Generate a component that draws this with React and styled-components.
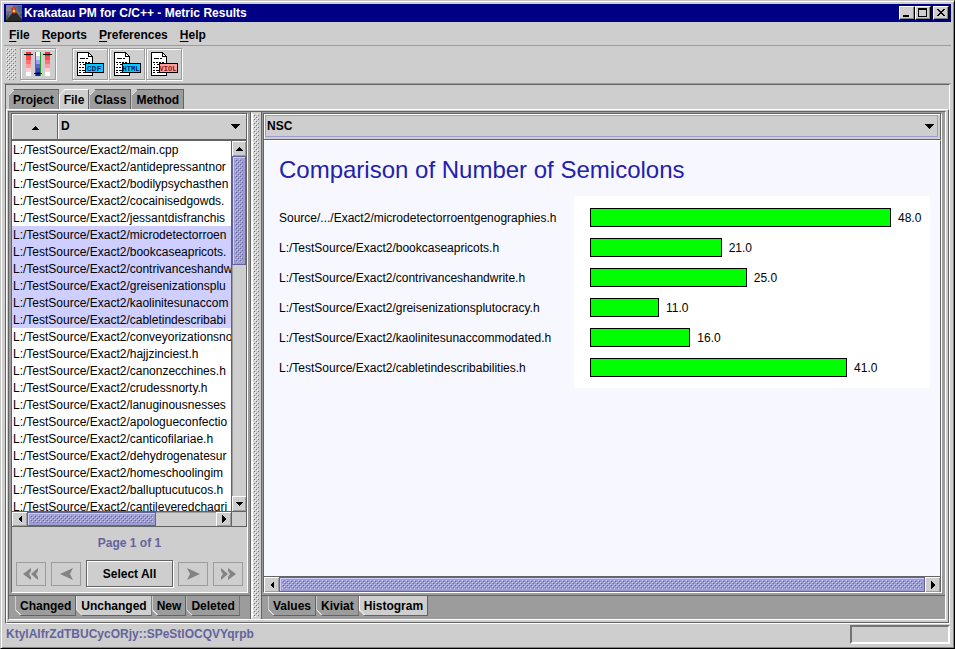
import React, { useState } from 'react';
import styled, { createGlobalStyle, css } from 'styled-components';

const Global = createGlobalStyle`
  *, *::before, *::after { box-sizing: border-box; }
  body {
    margin: 0;
    background: #cecece;
    color: #000;
    font: 12px/16px "Liberation Sans", Arial, sans-serif;
  }
  button, select { margin: 0; font: inherit; color: inherit; border-radius: 0; }
`;

const stipple = (light, dark) => css`
  background-image:
    conic-gradient(at 1px 1px, transparent 75%, ${light} 0),
    conic-gradient(at 1px 1px, transparent 75%, ${light} 0),
    conic-gradient(at 1px 1px, transparent 75%, ${dark} 0),
    conic-gradient(at 1px 1px, transparent 75%, ${dark} 0);
  background-size: 4px 4px;
  background-position: 0 0, 2px 2px, 1px 1px, 3px 3px;
`;

const Window = styled.div`
  display: flex;
  flex-direction: column;
  height: 100vh;
  min-height: 420px;
  padding: 3px;
  border: 1px solid;
  border-color: #c6c6c6 #000 #000 #c6c6c6;
  box-shadow: inset 1px 1px #fff, inset -1px -1px #848484;
  background: #cecece;
`;

const TitleBar = styled.header`
  display: flex;
  align-items: center;
  height: 18px;
  padding: 0 2px;
  background: #000084;
  color: #fff;
`;

const WindowTitle = styled.h1`
  flex: 1;
  margin: 0 0 0 2px;
  font-size: 12px;
  line-height: 18px;
  font-weight: bold;
  white-space: nowrap;
`;

const CaptionButton = styled.button`
  width: 16px;
  height: 14px;
  padding: 0;
  margin-left: ${(p) => (p.$apart ? '2px' : '0')};
  border: 1px solid;
  border-color: #fff #000 #000 #fff;
  box-shadow: inset -1px -1px #848484;
  background: #cecece;
  color: #000;
  svg { display: block; }
`;

const MenuBar = styled.nav`
  display: flex;
  gap: 12px;
  height: 24px;
  padding: 5px 5px 2px;
  border-bottom: 1px solid #9c9c9c;
`;

const MenuButton = styled.button`
  padding: 0;
  border: 0;
  background: none;
  font-weight: bold;
  line-height: 16px;
  &::first-letter { text-decoration: underline; text-underline-offset: 2px; }
`;

const ToolBar = styled.div`
  display: flex;
  height: 38px;
  padding: 2px;
  border-bottom: 1px solid #9c9c9c;
`;

const Grip = styled.div`
  width: 10px;
  height: 32px;
  margin-right: 4px;
  ${stipple('#fff', '#737373')}
`;

const ToolButton = styled.button`
  width: 36px;
  height: 32px;
  padding: 0;
  margin-right: ${(p) => (p.$last ? '16px' : '1px')};
  border: 1px solid #9c9c9c;
  box-shadow: 1px 1px #fff, inset 1px 1px #fff;
  background: none;
  svg { display: block; }
`;

const Frame = styled.main`
  flex: 1;
  min-height: 0;
  display: flex;
  flex-direction: column;
  margin: 0 1px;
  padding-top: 4px;
  border: 1px solid;
  border-color: #636363 #fff #fff #636363;
`;

const TabStrip = styled.div`
  display: flex;
  flex: none;
  padding-left: ${(p) => (p.$bottom ? '6px' : '2px')};
  ${(p) => p.$bottom && css`
    height: 24px;
    border-top: 1px solid #636363;
  `}
`;

const Tab = styled.button`
  height: 20px;
  padding: 0 4px;
  font-weight: bold;
  line-height: 18px;
  white-space: nowrap;
  border: 1px solid #636363;
  border-left-color: ${(p) => (p.$on ? '#fff' : '#cecece')};
  background-color: ${(p) => (p.$on ? '#cecece' : '#9c9c9c')};
  ${(p) => p.$bottom
    ? css`
        border-top: 0;
        clip-path: polygon(0 0, 100% 0, 100% 100%, 6px 100%, 0 calc(100% - 6px));
        background-image: linear-gradient(45deg, #e7e7e7 4px, transparent 4px);
      `
    : css`
        border-top-color: ${p.$on ? '#fff' : '#636363'};
        border-bottom: 0;
        clip-path: polygon(6px 0, 100% 0, 100% 100%, 0 100%, 0 6px);
        background-image: linear-gradient(135deg, #e7e7e7 4px, transparent 4px);
      `}
`;

const TabPage = styled.div`
  flex: 1;
  min-height: 0;
  display: flex;
  padding: 1px 2px 2px 1px;
  border: 1px solid;
  border-color: #fff #636363 #636363 #fff;
`;

const SplitPane = styled.div`
  flex: 1;
  min-width: 0;
  display: flex;
  border: 1px solid;
  border-color: #636363 #fff #fff #636363;
`;

const Divider = styled.div`
  flex: none;
  width: 10px;
  border: 2px solid #cecece;
  border-left-color: #fff;
  ${stipple('#fff', '#737373')}
`;

const Panel = styled.div`
  flex: 1;
  min-height: 0;
  display: flex;
  flex-direction: column;
  margin: 1px 2px 2px;
  border: 1px solid;
  border-color: #636363 #fff #fff #636363;
  background: #cecece;
`;

const Side = styled.section`
  display: flex;
  flex-direction: column;
  min-width: 0;
  background: #9c9c9c;
  ${(p) => p.$grow
    ? css`
        flex: 1;
        border-left: 1px solid #636363;
        > ${Panel} { margin: 1px 3px 2px 1px; }
      `
    : css`flex: none; width: 242px; border-right: 1px solid #636363;`}
`;

const Header = styled.div`
  display: flex;
  flex: none;
  height: 26px;
`;

const bevel = css`
  border: 1px solid #636363;
  box-shadow: inset 1px 1px #fff;
  background: #cecece;
`;

const SortButton = styled.button`
  ${bevel}
  width: 46px;
  padding: 0;
  border-width: 0 1px 1px 0;
  svg { display: block; margin: 2px auto 0; }
`;

const ComboBox = styled.div`
  flex: 1;
  min-width: 0;
  display: grid;
  align-items: center;
  padding: 1px 2px 2px 1px;
  ${bevel}
  border-width: 0 1px 1px 0;
  > * { grid-area: 1 / 1; }
  > svg { justify-self: end; margin-right: 4px; pointer-events: none; }
`;

const ComboSelect = styled.select`
  appearance: none;
  width: 100%;
  height: 100%;
  padding: 0 20px 0 1px;
  border: 1px solid ${(p) => (p.$focused ? '#9c9cce' : 'transparent')};
  outline: 0;
  background: none;
  font-weight: bold;
`;

const ListArea = styled.div`
  flex: 1;
  min-height: 0;
  display: grid;
  grid-template-columns: minmax(0, 1fr) 15px;
  grid-template-rows: minmax(0, 1fr) 15px;
  border: 1px solid #636363;
  border-left: 0;
`;

const FileList = styled.ul`
  margin: 0;
  padding: 0;
  overflow: hidden;
  list-style: none;
  background: #fff;
`;

const FileRow = styled.li`
  height: 17px;
  padding: 1px 0 0 1px;
  line-height: 17px;
  white-space: nowrap;
  background: ${(p) => (p.$selected ? '#ceceff' : 'none')};
`;

const ScrollBar = styled.div`
  display: flex;
  flex: none;
  min-width: 0;
  min-height: 0;
  ${(p) => p.$vertical
    ? css`flex-direction: column; border-left: 1px solid #636363;`
    : css`height: 15px; border-top: 1px solid #636363;`}
`;

const PageScroll = styled.div`
  flex: none;
  border-top: 1px solid #636363;
  border-right: 1px solid #636363;
  > ${ScrollBar} { border-top: 0; }
`;

const ScrollButton = styled.button`
  flex: none;
  display: flex;
  align-items: center;
  justify-content: center;
  width: ${(p) => (p.$vertical ? 'auto' : '15px')};
  height: ${(p) => (p.$vertical ? '15px' : 'auto')};
  padding: 0;
  border: 0;
  box-shadow: inset 1px 1px #fff, inset -1px -1px #9c9c9c;
  background: #cecece;
`;

const ScrollTrack = styled.div`
  flex: 1;
  display: flex;
  flex-direction: ${(p) => (p.$vertical ? 'column' : 'row')};
  box-shadow: inset 1px 1px #9c9c9c;
`;

const ScrollThumb = styled.div`
  flex: 0 0 ${(p) => p.$size};
  padding: 2px;
  border: 1px solid #63639c;
  box-shadow: inset 1px 1px #ceceff;
  background: #9c9cce;
  &::before {
    content: '';
    display: block;
    height: 100%;
    ${stipple('#ceceff', '#63639c')}
  }
`;

const Corner = styled.div`
  border-left: 1px solid #636363;
  border-top: 1px solid #636363;
`;

const Pager = styled.footer`
  flex: none;
  padding: 8px 4px 5px;
`;

const PageLabel = styled.p`
  margin: 0 0 9px;
  font-weight: bold;
  line-height: 16px;
  text-align: center;
  color: #63639c;
`;

const PagerButtons = styled.div`
  display: flex;
  align-items: center;
  justify-content: center;
  gap: 5px;
`;

const ArrowButton = styled.button`
  display: flex;
  align-items: center;
  justify-content: center;
  width: 30px;
  height: 24px;
  padding: 0;
  border: 1px solid #9c9c9c;
  background: none;
`;

const SelectAll = styled.button`
  width: 87px;
  height: 27px;
  padding: 0;
  border: 1px solid #636363;
  box-shadow: inset 1px 1px #fff, 1px 1px #fff;
  background: none;
  font-weight: bold;
`;

const Viewport = styled.div`
  flex: 1;
  min-height: 0;
  overflow: hidden;
  padding: 14px 10px 0 15px;
  border-top: 1px solid #fff;
  border-right: 1px solid #636363;
  background: #f7f7ff;
`;

const ChartTitle = styled.h2`
  margin: 0 0 11px;
  font-size: 24px;
  line-height: 30px;
  font-weight: normal;
  color: #2121ad;
`;

const Chart = styled.div`
  display: flex;
`;

const Labels = styled.div`
  flex: none;
  width: 295px;
  padding: 7px 0 5px;
`;

const LabelRow = styled.div`
  height: 30px;
  line-height: 30px;
  white-space: nowrap;
`;

const Plot = styled.div`
  flex: 1;
  padding: 6px 0 6px 16px;
  background: #fff;
`;

const BarRow = styled.div`
  display: flex;
  align-items: center;
  gap: 7px;
  height: 30px;
`;

const BarValue = styled.span`
  padding-top: 2px;
`;

const Bar = styled.div`
  flex: none;
  height: 19px;
  border: 1px solid #000;
  background: #0f0;
`;

const StatusBar = styled.div`
  display: flex;
  flex: none;
  justify-content: space-between;
  height: 21px;
  padding: 1px 1px 1px 2px;
  color: #63639c;
  font-weight: bold;
  line-height: 18px;
`;

const Progress = styled.div`
  width: 100px;
  border: 2px solid;
  border-color: #737373 #fff #fff #737373;
`;

const Triangle = ({ dir, size = 4 }) => {
  const n = size;
  const flat = dir === 'up' || dir === 'down';
  const w = flat ? n * 2 : n;
  const h = flat ? n : n * 2;
  const pts = {
    up: `0,${h} ${n},0 ${w},${h}`,
    down: `0,0 ${w},0 ${n},${h}`,
    left: `${w},0 0,${n} ${w},${h}`,
    right: `0,0 ${w},${n} 0,${h}`,
  }[dir];
  return (
    <svg width={w} height={h} shapeRendering="crispEdges" aria-hidden="true">
      <polygon points={pts} />
    </svg>
  );
};

const VolcanoIcon = () => (
  <svg width="16" height="16" aria-hidden="true">
    <rect width="16" height="16" fill="#66708c" />
    <path d="M0 0h7v3H5v3H0z" fill="#8c8494" />
    <path d="M10 1h6v6h-3z" fill="#4a6384" />
    <path d="M6 3l2-2 2 2v4H6z" fill="#b53929" />
    <path d="M7 5l1-3 1 3 3 4-3-1-3 1-1-1z" fill="#ff5a29" />
    <path d="M7 5h2v2H7z" fill="#ffce42" />
    <path d="M0 15l4-4 3-4 1 2 2-2 3 4 3 3v2H0z" fill="#292929" />
    <path d="M0 11l3-2-1 4-2 2zM13 10l3-2v4z" fill="#4a5a42" />
  </svg>
);

const reds = ['#ff2929', '#ff4a4a', '#ff7373', '#ff9c9c', '#ffcece', '#fff'];
const blues = ['#fff', '#ceceff', '#9c9cff', '#6363ce', '#4242b5', '#1818a5'];

const RangeIcon = () => (
  <svg width="34" height="30" shapeRendering="crispEdges" aria-hidden="true">
    {reds.map((c, i) => (
      <g key={c} fill={c}>
        <rect x="5" y={3 + i * 4} width="5" height="4" />
        <rect x="24" y={3 + i * 4} width="5" height="4" />
      </g>
    ))}
    {blues.map((c, i) => (
      <rect key={c} x="15" y={3 + i * 4} width="4" height="4" fill={c} />
    ))}
    <path d="M14 3h1v24h-1zM19 3h1v24h-1z" fill="#219c21" />
    <path d="M3 5h9v1H3zM22 5h9v1h-9zM13 24h8v1h-8z" />
  </svg>
);

const ReportIcon = ({ label, size = 7, fill, ink }) => (
  <svg width="34" height="30" shapeRendering="crispEdges" aria-hidden="true">
    <path d="M4 3h12v1h1v1h1v1h1v1h1v20H4z" />
    <path d="M5 4h10v4h4v18H5z" fill="#fff" />
    <path d="M16 5v2h2z" fill="#fff" />
    <path
      d="M7 9.5h5m1 0h2M6 13.5h2m1 0h2m1 0h2m1 0h2M7 15.5h1m2 0h2m2 0h1M6 18.5h2m1 0h2M6 21.5h2m1 0h3M6 23.5h2m2 0h2m2 0h2"
      stroke="#000"
    />
    <rect x="12" y="14" width="19" height="10" />
    <rect x="13" y="15" width="17" height="8" fill={fill} />
    <text
      x="21"
      y="22"
      textAnchor="middle"
      fontFamily="Liberation Mono, monospace"
      fontSize={size}
      fontWeight="bold"
      fill={ink}
    >
      {label}
    </text>
  </svg>
);

const DartIcon = ({ dir, double }) => (
  <svg
    width={double ? 16 : 13}
    height="12"
    viewBox={double ? '0 0 16 12' : '0 0 13 12'}
    fill="#848484"
    aria-hidden="true"
  >
    <g transform={dir === 'right' ? `translate(${double ? 16 : 13} 0) scale(-1 1)` : undefined}>
      {double ? (
        <path d="M0 6L8 0V3L6 6L8 9V12zM8 6L15 0V3L13 6L15 9V12z" />
      ) : (
        <path d="M0 6L13 0L10 6L13 12z" />
      )}
    </g>
  </svg>
);

const files = [
  'main.cpp', 'antidepressantnor', 'bodilypsychasthen', 'cocainisedgowds.',
  'jessantdisfranchis', 'microdetectorroen', 'bookcaseapricots.',
  'contrivanceshandw', 'greisenizationsplu', 'kaolinitesunaccom',
  'cabletindescribabi', 'conveyorizationsno', 'hajjzinciest.h', 'canonzecchines.h',
  'crudessnorty.h', 'lanuginousnesses', 'apologueconfectio', 'canticofilariae.h',
  'dehydrogenatesur', 'homeschoolingim', 'balluptucutucos.h', 'cantileveredchagri',
];

const bars = [
  ['Source/.../Exact2/microdetectorroentgenographies.h', 48],
  ['L:/TestSource/Exact2/bookcaseapricots.h', 21],
  ['L:/TestSource/Exact2/contrivanceshandwrite.h', 25],
  ['L:/TestSource/Exact2/greisenizationsplutocracy.h', 11],
  ['L:/TestSource/Exact2/kaolinitesunaccommodated.h', 16],
  ['L:/TestSource/Exact2/cabletindescribabilities.h', 41],
];

const Tabs = ({ names, initial, bottom }) => {
  const [active, setActive] = useState(initial);
  return (
    <TabStrip $bottom={bottom} role="tablist">
      {names.map((n) => (
        <Tab
          key={n}
          role="tab"
          aria-selected={n === active}
          $on={n === active}
          $bottom={bottom}
          onClick={() => setActive(n)}
        >
          {n}
        </Tab>
      ))}
    </TabStrip>
  );
};

const Scroller = ({ vertical, size }) => (
  <ScrollBar $vertical={vertical}>
    <ScrollButton $vertical={vertical} aria-label={vertical ? 'Scroll up' : 'Scroll left'}>
      <Triangle dir={vertical ? 'up' : 'left'} />
    </ScrollButton>
    <ScrollTrack $vertical={vertical}>
      <ScrollThumb $size={size} />
    </ScrollTrack>
    <ScrollButton $vertical={vertical} aria-label={vertical ? 'Scroll down' : 'Scroll right'}>
      <Triangle dir={vertical ? 'down' : 'right'} />
    </ScrollButton>
  </ScrollBar>
);

export default function App() {
  return (
    <Window>
      <Global />
      <TitleBar>
        <VolcanoIcon />
        <WindowTitle>Krakatau PM for C/C++ - Metric Results</WindowTitle>
        <CaptionButton aria-label="Minimize">
          <svg width="14" height="12"><path d="M3 8h6v2H3z" /></svg>
        </CaptionButton>
        <CaptionButton aria-label="Maximize">
          <svg width="14" height="12"><path d="M2 1h9v9H2zM3 3v6h7V3z" fillRule="evenodd" /></svg>
        </CaptionButton>
        <CaptionButton $apart aria-label="Close">
          <svg width="14" height="12" shapeRendering="crispEdges">
            <path d="M3 2h2v1h1v1h2V3h1V2h2v1h-1v1H9v1H8v1h1v1h1v1h1v1H9V8H8V7H6v1H5v1H3V8h1V7h1V6h1V5H5V4H4V3H3z" />
          </svg>
        </CaptionButton>
      </TitleBar>

      <MenuBar>
        {['File', 'Reports', 'Preferences', 'Help'].map((m) => (
          <MenuButton key={m}>{m}</MenuButton>
        ))}
      </MenuBar>

      <ToolBar>
        <Grip />
        <ToolButton $last aria-label="Metric ranges"><RangeIcon /></ToolButton>
        <ToolButton aria-label="CDF report"><ReportIcon label="CDF" size={8} fill="#00ceff" ink="#001863" /></ToolButton>
        <ToolButton aria-label="HTML report"><ReportIcon label="HTML" fill="#00ceff" ink="#001863" /></ToolButton>
        <ToolButton aria-label="Violations report"><ReportIcon label="VIOL" fill="#ff9c9c" ink="#7b1818" /></ToolButton>
      </ToolBar>

      <Frame>
        <Tabs names={['Project', 'File', 'Class', 'Method']} initial="File" />
        <TabPage>
          <SplitPane>
            <Side>
              <Panel>
                <Header>
                  <SortButton aria-label="Sort ascending"><Triangle dir="up" /></SortButton>
                  <ComboBox>
                    <ComboSelect aria-label="Metric to sort by"><option>D</option></ComboSelect>
                    <Triangle dir="down" size={5} />
                  </ComboBox>
                </Header>
                <ListArea>
                  <FileList>
                    {files.map((f, i) => (
                      <FileRow key={f} $selected={i > 4 && i < 11}>L:/TestSource/Exact2/{f}</FileRow>
                    ))}
                  </FileList>
                  <Scroller vertical size="32%" />
                  <Scroller size="68%" />
                  <Corner />
                </ListArea>
                <Pager>
                  <PageLabel>Page 1 of 1</PageLabel>
                  <PagerButtons>
                    <ArrowButton disabled aria-label="First page"><DartIcon dir="left" double /></ArrowButton>
                    <ArrowButton disabled aria-label="Previous page"><DartIcon dir="left" /></ArrowButton>
                    <SelectAll>Select All</SelectAll>
                    <ArrowButton disabled aria-label="Next page"><DartIcon dir="right" /></ArrowButton>
                    <ArrowButton disabled aria-label="Last page"><DartIcon dir="right" double /></ArrowButton>
                  </PagerButtons>
                </Pager>
              </Panel>
              <Tabs bottom names={['Changed', 'Unchanged', 'New', 'Deleted']} initial="Unchanged" />
            </Side>
            <Divider />
            <Side $grow>
              <Panel>
                <Header>
                  <ComboBox>
                    <ComboSelect $focused aria-label="Metric"><option>NSC</option></ComboSelect>
                    <Triangle dir="down" size={5} />
                  </ComboBox>
                </Header>
                <Viewport>
                  <ChartTitle>Comparison of Number of Semicolons</ChartTitle>
                  <Chart>
                    <Labels>
                      {bars.map(([name]) => <LabelRow key={name}>{name}</LabelRow>)}
                    </Labels>
                    <Plot>
                      {bars.map(([name, value]) => (
                        <BarRow key={name}>
                          <Bar style={{ width: `calc((100% - 39px) * ${value / 48})` }} />
                          <BarValue>{value.toFixed(1)}</BarValue>
                        </BarRow>
                      ))}
                    </Plot>
                  </Chart>
                </Viewport>
                <PageScroll><Scroller size="100%" /></PageScroll>
              </Panel>
              <Tabs bottom names={['Values', 'Kiviat', 'Histogram']} initial="Histogram" />
            </Side>
          </SplitPane>
        </TabPage>
      </Frame>

      <StatusBar>
        <span>KtylAlfrZdTBUCycORjy::SPeStlOCQVYqrpb</span>
        <Progress />
      </StatusBar>
    </Window>
  );
}
